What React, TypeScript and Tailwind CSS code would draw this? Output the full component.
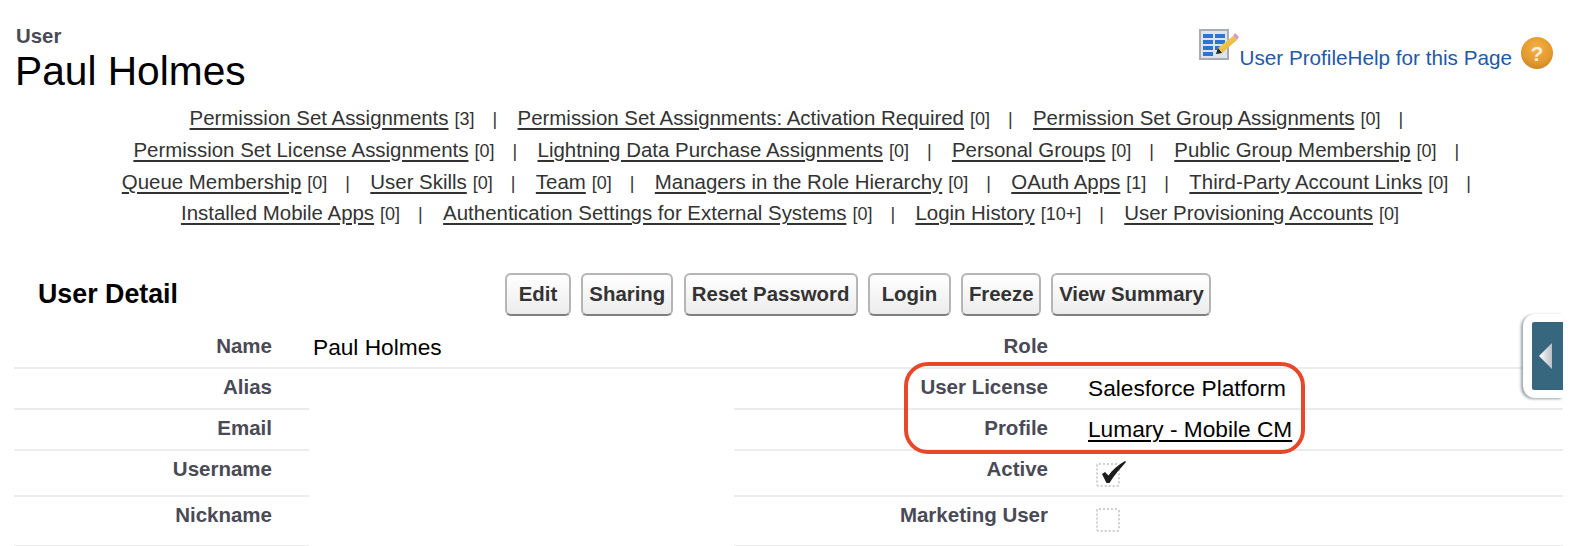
const linkRows = [
  [
    ['Permission Set Assignments', '[3]'],
    ['Permission Set Assignments: Activation Required', '[0]'],
    ['Permission Set Group Assignments', '[0]'],
  ],
  [
    ['Permission Set License Assignments', '[0]'],
    ['Lightning Data Purchase Assignments', '[0]'],
    ['Personal Groups', '[0]'],
    ['Public Group Membership', '[0]'],
  ],
  [
    ['Queue Membership', '[0]'],
    ['User Skills', '[0]'],
    ['Team', '[0]'],
    ['Managers in the Role Hierarchy', '[0]'],
    ['OAuth Apps', '[1]'],
    ['Third-Party Account Links', '[0]'],
  ],
  [
    ['Installed Mobile Apps', '[0]'],
    ['Authentication Settings for External Systems', '[0]'],
    ['Login History', '[10+]'],
    ['User Provisioning Accounts', '[0]'],
  ],
];

const buttons = [
  { label: 'Edit', width: 'w-[66px]' },
  { label: 'Sharing', width: 'w-[92px]' },
  { label: 'Reset Password', width: 'w-[174px]' },
  { label: 'Login', width: 'w-[83px]' },
  { label: 'Freeze', width: 'w-[80px]' },
  { label: 'View Summary', width: 'w-[160px]' },
];

function TableEditIcon() {
  return (
    <svg width="40" height="32" viewBox="0 0 40 32" className="shrink-0 mb-[7px]">
      <defs>
        <linearGradient id="pencil" x1="0" y1="0" x2="1" y2="1">
          <stop offset="0" stopColor="#f7dd6a" />
          <stop offset="1" stopColor="#e2a62c" />
        </linearGradient>
      </defs>
      <rect x="0" y="0" width="30" height="31" fill="#a9adb3" />
      <rect x="2" y="2" width="26" height="27" fill="#dfe3ea" />
      <rect x="4" y="5" width="10" height="4" fill="#2f73d6" />
      <rect x="16" y="5" width="10" height="4" fill="#2f73d6" />
      <rect x="4" y="11" width="10" height="4" fill="#2f73d6" />
      <rect x="16" y="11" width="10" height="4" fill="#2f73d6" />
      <rect x="4" y="17" width="10" height="4" fill="#2f73d6" />
      <rect x="16" y="17" width="8" height="4" fill="#2f73d6" />
      <rect x="4" y="23" width="10" height="4" fill="#2f73d6" />
      <path d="M17 25 L19 19 L34 7 L38 11 L23 24 Z" fill="url(#pencil)" />
      <path d="M17 25 L19 19 L23 24 Z" fill="#23262b" />
      <path d="M34 7 L36 4 L40 8 L38 11 Z" fill="#d79ac0" />
    </svg>
  );
}

function HelpIcon() {
  return (
    <div className="w-[32px] h-[32px] mb-[-1px] ml-[9px] shrink-0 rounded-full flex items-center justify-center bg-[radial-gradient(circle_at_50%_35%,#f4b046_0%,#e39a2e_55%,#b97a24_100%)] text-white/80 font-bold text-[21px] leading-none">
      ?
    </div>
  );
}

function SideTab() {
  return (
    <div className="absolute left-[1523px] top-[314px] w-[40px] h-[84px] pl-[9px] py-[8px] bg-white rounded-l-[12px] shadow-[-2px_1px_3px_#98a2aa]">
      <div className="h-full bg-[#37667f] rounded-l-[2px] flex items-center pl-[7px]">
        <svg width="14" height="26" viewBox="0 0 14 26">
          <defs>
            <linearGradient id="arrow" x1="0" y1="0" x2="1" y2="0">
              <stop offset="0" stopColor="#ffffff" />
              <stop offset="1" stopColor="#b9c0c4" />
            </linearGradient>
          </defs>
          <path d="M13 0 L13 26 L0 13 Z" fill="url(#arrow)" />
        </svg>
      </div>
    </div>
  );
}

function Checkbox({ checked }: { checked?: boolean }) {
  return (
    <div className="relative w-[24px] h-[24px] ml-[8px] border-2 border-dotted border-[#cfcfcf] rounded-[3px]">
      {checked && (
        <svg width="32" height="26" viewBox="0 0 32 26" className="absolute left-[-2px] top-[-5px]">
          <path d="M6 14 L9 12 L12.5 15.5 C16 10 22 5 29 1 L30 2 C25 8 18 15 13.5 23 L10.5 23 Z" fill="#1c1c1c" />
        </svg>
      )}
    </div>
  );
}

function Label({ children, height, line = true }: { children: string; height: string; line?: boolean }) {
  return (
    <div className={`${height} pt-[6px] pr-[37px] text-right text-[20.5px] leading-[23px] font-bold text-[#4a4a56] ${line ? 'border-b-2 border-[#ececec]' : ''}`}>
      {children}
    </div>
  );
}

function DetailRow({
  left,
  right,
  height,
  nameValue,
  value,
}: {
  left: string;
  right: string;
  height: string;
  nameValue?: string;
  value?: React.ReactNode;
}) {
  return (
    <div className="flex">
      <div className="w-[295px]">
        <Label height={height}>{left}</Label>
      </div>
      <div className={`w-[425px] ${height} pl-[4px] pt-[6px] text-[22.7px] leading-[26px] text-black ${nameValue ? 'border-b-2 border-[#ececec]' : ''}`}>
        {nameValue}
      </div>
      <div className="w-[351px]">
        <Label height={height}>{right}</Label>
      </div>
      <div className={`w-[478px] ${height} pl-[3px] pt-[6px] text-[22.7px] leading-[26px] text-black border-b-2 border-[#ececec]`}>
        {value}
      </div>
    </div>
  );
}

export default function App() {
  return (
    <div className="relative w-[1584px] h-[546px] overflow-hidden bg-white font-['Liberation_Sans',Arial,sans-serif]">
      {/* page title */}
      <div className="flex justify-between h-[102px] pt-[24px] pl-[15px] pr-[31px]">
        <div>
          <div className="pl-[1px] text-[20.4px] leading-[24px] font-bold text-[#4a4a56]">User</div>
          <div className="text-[40.7px] leading-[46px] text-black">Paul Holmes</div>
        </div>
        <div className="flex items-end h-[44px] pt-[5px]">
          <TableEditIcon />
          <a className="text-[20.7px] leading-[24px] text-[#2359a6] mb-[-2px]">User ProfileHelp for this Page</a>
          <HelpIcon />
        </div>
      </div>

      {/* related list links */}
      <div className="w-[1590px] h-[127px] text-[#333333]">
        {linkRows.map((row, i) => (
          <div key={i} className={`flex justify-center items-baseline h-[31.75px] leading-[31.75px] ${i === 3 ? 'pr-[10px]' : ''}`}>
            {row.map(([name, count], j) => (
              <div key={name} className="flex items-baseline">
                <a className="text-[20.45px] underline underline-offset-[3px]">{name}</a>
                <span className="ml-[6px] text-[18px]">{count}</span>
                {j < row.length - 1 || i < 3 ? (
                  <span className={`text-[18px] w-[2px] ml-[18px] ${j < row.length - 1 ? 'mr-[23px]' : ''}`}>|</span>
                ) : null}
              </div>
            ))}
          </div>
        ))}
      </div>

      {/* section header */}
      <div className="flex items-center h-[43px] mt-[44px] mb-[12px]">
        <h2 className="w-[505px] pl-[38px] text-[26.8px] font-bold text-black">User Detail</h2>
        <div className="flex gap-[10.3px]">
          {buttons.map((b) => (
            <button
              key={b.label}
              className={`${b.width} h-[43px] text-center text-[20.4px] font-bold text-[#333333] rounded-[6px] border-2 border-[#b5b5b5] border-b-[#7f7f7f] bg-gradient-to-b from-white to-[#ececec]`}
            >
              {b.label}
            </button>
          ))}
        </div>
      </div>

      {/* detail table */}
      <div className="pl-[14px]">
        <DetailRow left="Name" right="Role" height="h-[41px]" nameValue="Paul Holmes" />
        <DetailRow left="Alias" right="User License" height="h-[41px]" value="Salesforce Platform" />
        <DetailRow left="Email" right="Profile" height="h-[41px]" value={<a className="underline underline-offset-[3px]">Lumary - Mobile CM</a>} />
        <DetailRow left="Username" right="Active" height="h-[46px]" value={<div className="pt-[6px]"><Checkbox checked /></div>} />
        <DetailRow left="Nickname" right="Marketing User" height="h-[50px]" value={<div className="pt-[5px]"><Checkbox /></div>} />
      </div>

      {/* annotation around license and profile */}
      <div className="absolute left-[904px] top-[362px] w-[401px] h-[92px] border-[4px] border-[#e8482a] rounded-[24px]" />

      <SideTab />
    </div>
  );
}
